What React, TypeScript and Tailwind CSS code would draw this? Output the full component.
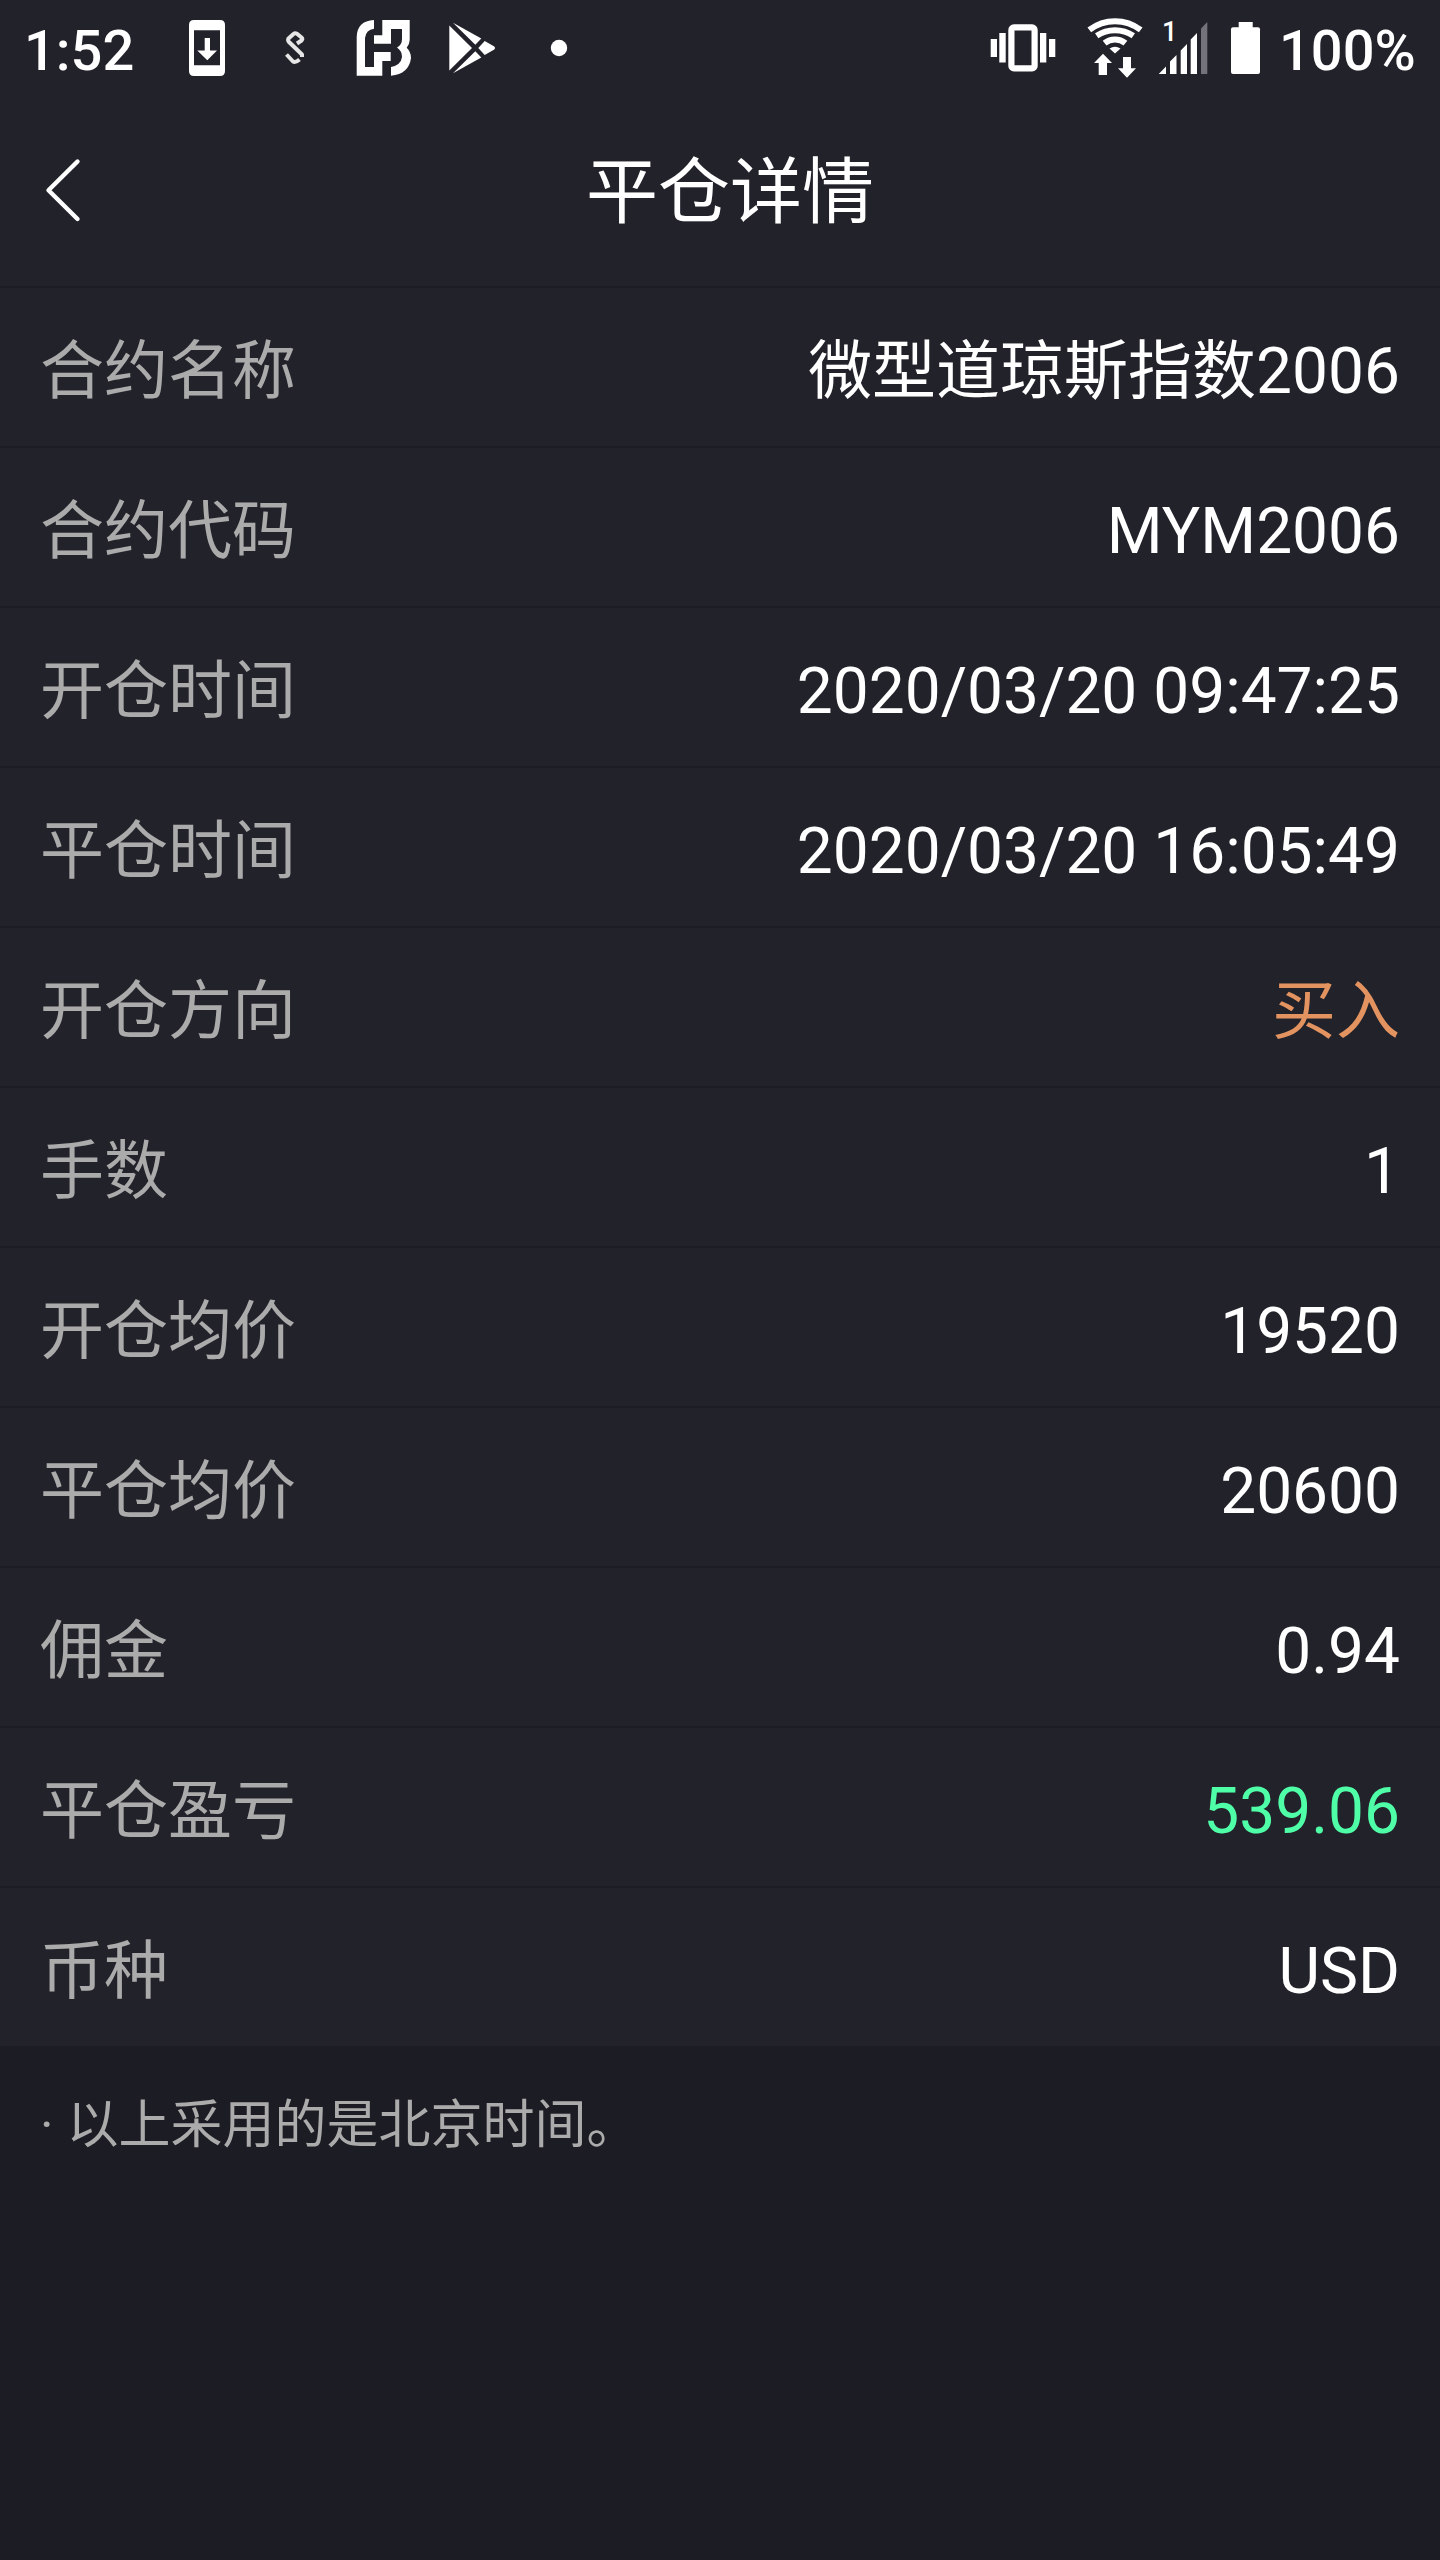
import type { ReactNode } from "react"
import clsx from "clsx"

const details = [
  { label: "合约名称", value: "微型道琼斯指数2006" },
  { label: "合约代码", value: "MYM2006" },
  { label: "开仓时间", value: "2020/03/20 09:47:25" },
  { label: "平仓时间", value: "2020/03/20 16:05:49" },
  { label: "开仓方向", value: "买入", color: "text-[#e3935f]" },
  { label: "手数", value: "1" },
  { label: "开仓均价", value: "19520" },
  { label: "平仓均价", value: "20600" },
  { label: "佣金", value: "0.94" },
  { label: "平仓盈亏", value: "539.06", color: "text-[#4fffa8]" },
  { label: "币种", value: "USD" },
]

function NotificationIcons() {
  return (
    <svg className="h-24 w-[400px] shrink-0" viewBox="180 0 400 96" fill="#fff">
      {/* system update */}
      <path
        fillRule="evenodd"
        d="M194 20H220Q225 20 225 25V71Q225 76 220 76H194Q189 76 189 71V25Q189 20 194 20ZM194 30.3V65.3H220V30.3Z"
      />
      <path d="M204.7 38H210V50.5H217L207.3 60.3L197.3 50.5H204.7Z" />
      {/* S-shaped link */}
      <path
        d="M297 43.5L301.5 40.5Q303 39 301.5 37.5L297 33.8Q295 32.8 293.5 34L288.5 38.5Q287.5 40.5 289 42L302 54.5V57M286.5 54.5L293 61.5Q295.5 63 299.5 59.5"
        fill="none"
        stroke="#e6e6e6"
        strokeWidth="4"
        strokeLinejoin="round"
      />
      {/* broker mark */}
      <path d="M374 20Q357 21 356.7 37V75.7H382.3V61H390.7V52H374V67H365V38Q366 29.5 374 28.7Z" />
      <path d="M382.3 20H409.7V40Q409.5 44.5 406.7 47.8Q411 52 411 58Q409 74 391 75.7V67Q401 65 402 57Q402 51 397 47.5Q402 45 402 39V29H391V43.7H374V35.3H382.3Z" />
      {/* play store */}
      <path d="M449.3 25.5L472 48L449.3 70.5Z" />
      <path d="M453 22.7L481.3 38.5L475.3 44.7Z" />
      <path d="M453 73.3L481.3 57.5L475.3 51.3Z" />
      <path d="M484.7 41L494.3 46.5Q496 48 494.3 49.5L484.7 55L478.3 48Z" />
      <circle cx="559" cy="48" r="8.2" />
    </svg>
  )
}

function SystemIcons() {
  return (
    <svg className="h-24 w-[290px] shrink-0" viewBox="980 0 290 96" fill="#fff">
      {/* vibrate */}
      <path d="M990.7 39H997V57H990.7ZM999.3 33H1005.7V62.5H999.3ZM1040 33H1046.3V62.5H1040ZM1049 39H1055.3V57H1049Z" />
      <rect x="1011.4" y="27.4" width="23.2" height="41" rx="2.5" fill="none" stroke="#fff" strokeWidth="6.2" />
      {/* wifi */}
      <g fill="none" stroke="#fff" strokeWidth="6">
        <path d="M1089.3 29.9A42.3 42.3 0 0 1 1140.7 29.9" />
        <path d="M1096.7 35.7A33 33 0 0 1 1133.3 35.7" />
        <path d="M1104.6 43.2A16.5 16.5 0 0 1 1125.4 43.2" />
      </g>
      <path d="M1109.5 48.5Q1115 45 1120.5 48.5L1115 53.5Z" />
      <path d="M1103 53.7L1112 63H1107V75H1098.7V63H1094Z" />
      <path d="M1127 77.7L1136 68.3H1131V57H1123V68.3H1118Z" />
      {/* signal */}
      <text x="1162" y="41" fontFamily="Roboto, sans-serif" fontSize="27" fontWeight="500">
        1
      </text>
      <path d="M1158.7 74L1166 66.5V74ZM1170 74V61.5L1176.5 55V74ZM1180.7 74V50.5L1187 44V74ZM1190.7 74V39.5L1197 33V74Z" />
      <path d="M1201 74V28.5L1207.3 22V74Z" fill="#737379" />
      {/* battery */}
      <rect x="1231" y="27.3" width="29" height="46.7" rx="2" />
      <rect x="1238.7" y="22" width="14" height="7" />
    </svg>
  )
}

function StatusBar() {
  return (
    <div className="flex h-24 items-center pl-6 font-[Roboto,sans-serif] text-[56px] font-medium">
      <span className="w-[156px] pt-1.5">1:52</span>
      <NotificationIcons />
      <div className="flex-1" />
      <SystemIcons />
      <span className="w-[170px] pt-1.5 pl-[9px]">100%</span>
    </div>
  )
}

function Header({ children }: { children: ReactNode }) {
  return (
    <header className="grid h-48 grid-cols-[120px_1fr_100px] items-center border-b-2 border-[#1c1c24]">
      <svg className="h-20 w-[120px]" viewBox="0 0 120 80" fill="none" stroke="#fff" strokeWidth="4.4">
        <path d="M77.5 10.5L48.5 39.3L77.5 68" strokeLinecap="round" strokeLinejoin="round" />
      </svg>
      <h1 className="pt-[3px] text-center text-[72px] leading-none">{children}</h1>
    </header>
  )
}

export default function App() {
  return (
    <div className="min-h-[2560px] w-full bg-[#1c1c24] font-[Roboto,'Noto_Sans_CJK_SC',sans-serif] text-white">
      <div className="bg-[#22222b]">
        <StatusBar />
        <Header>平仓详情</Header>
        {details.map((item) => (
          <div
            key={item.label}
            className="flex h-40 items-center justify-between border-b-2 border-[#1c1c24] px-10 pt-2.5 text-[64px] leading-none"
          >
            <span className="text-[#ababab]">{item.label}</span>
            <span className={clsx(item.color)}>{item.value}</span>
          </div>
        ))}
      </div>
      <p className="px-10 pt-[52px] text-[52px] leading-none text-[#ababab]">· 以上采用的是北京时间。</p>
    </div>
  )
}
